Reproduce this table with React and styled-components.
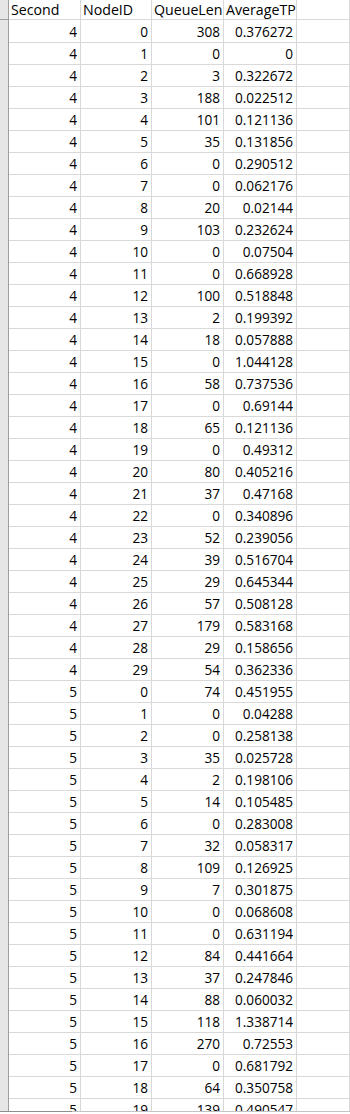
import React from "react";
import styled, { createGlobalStyle } from "styled-components";

const Global = createGlobalStyle`
  html, body { margin: 0; padding: 0; background: #fff; }
  body { width: 350px; height: 1114px; overflow: hidden; }
`;

const Sheet = styled.div`
  position: relative;
  width: 350px;
  height: 1114px;
  overflow: hidden;
  font-family: "Open Sans", "Liberation Sans", sans-serif;
  font-size: 13.6px;
  color: #000;
`;

const Row = styled.div`
  display: grid;
  grid-template-columns: 9px 72px 71px 72px 73px 1fr;
  height: ${(p) => (p.$header ? 20 : 22)}px;
`;

const RowHead = styled.div`
  box-sizing: border-box;
  background: #e6e6e6;
  border-right: 1px solid #9e9e9e;
  border-bottom: 1px solid #9e9e9e;
`;

const Cell = styled.div`
  box-sizing: border-box;
  border-right: 1px solid #d9d9d9;
  border-bottom: 1px solid #d9d9d9;
  font-size: ${(p) => (p.$header ? "14.2px" : "inherit")};
  line-height: ${(p) => (p.$header ? 19 : 20)}px;
  padding: ${(p) => (p.$header ? "0 0 0 2px" : "2px 3px 0 2px")};
  text-align: ${(p) => (p.$left ? "left" : "right")};
  white-space: nowrap;
  overflow: visible;
`;

const TabBar = styled.div`
  position: absolute;
  left: 0;
  right: 0;
  bottom: 0;
  height: 3px;
  background: #fff;
  display: flex;
`;

const TabEdge = styled.div`
  width: 72px;
  border-top: 1px solid #8e8e8e;
`;

const TabRest = styled.div`
  flex: 1;
  border-top: 1px solid #c4c4c4;
`;

const d4 = [
  [0, 308, "0.376272"], [1, 0, "0"], [2, 3, "0.322672"], [3, 188, "0.022512"],
  [4, 101, "0.121136"], [5, 35, "0.131856"], [6, 0, "0.290512"], [7, 0, "0.062176"],
  [8, 20, "0.02144"], [9, 103, "0.232624"], [10, 0, "0.07504"], [11, 0, "0.668928"],
  [12, 100, "0.518848"], [13, 2, "0.199392"], [14, 18, "0.057888"], [15, 0, "1.044128"],
  [16, 58, "0.737536"], [17, 0, "0.69144"], [18, 65, "0.121136"], [19, 0, "0.49312"],
  [20, 80, "0.405216"], [21, 37, "0.47168"], [22, 0, "0.340896"], [23, 52, "0.239056"],
  [24, 39, "0.516704"], [25, 29, "0.645344"], [26, 57, "0.508128"], [27, 179, "0.583168"],
  [28, 29, "0.158656"], [29, 54, "0.362336"],
];
const d5 = [
  [0, 74, "0.451955"], [1, 0, "0.04288"], [2, 0, "0.258138"], [3, 35, "0.025728"],
  [4, 2, "0.198106"], [5, 14, "0.105485"], [6, 0, "0.283008"], [7, 32, "0.058317"],
  [8, 109, "0.126925"], [9, 7, "0.301875"], [10, 0, "0.068608"], [11, 0, "0.631194"],
  [12, 84, "0.441664"], [13, 37, "0.247846"], [14, 88, "0.060032"], [15, 118, "1.338714"],
  [16, 270, "0.72553"], [17, 0, "0.681792"], [18, 64, "0.350758"], [19, 139, "0.490547"],
];

const rows = [
  ...d4.map((r) => [4, ...r]),
  ...d5.map((r) => [5, ...r]),
];

export default function App() {
  return (
    <Sheet>
      <Global />
      <Row $header>
        <RowHead />
        <Cell $header $left>Second</Cell>
        <Cell $header $left>NodeID</Cell>
        <Cell $header $left>QueueLen</Cell>
        <Cell $header $left>AverageTP</Cell>
        <Cell $header $left />
      </Row>
      {rows.map((r, i) => (
        <Row key={i}>
          <RowHead />
          <Cell>{r[0]}</Cell>
          <Cell>{r[1]}</Cell>
          <Cell>{r[2]}</Cell>
          <Cell>{r[3]}</Cell>
          <Cell />
        </Row>
      ))}
      <TabBar>
        <TabEdge />
        <TabRest />
      </TabBar>
    </Sheet>
  );
}
